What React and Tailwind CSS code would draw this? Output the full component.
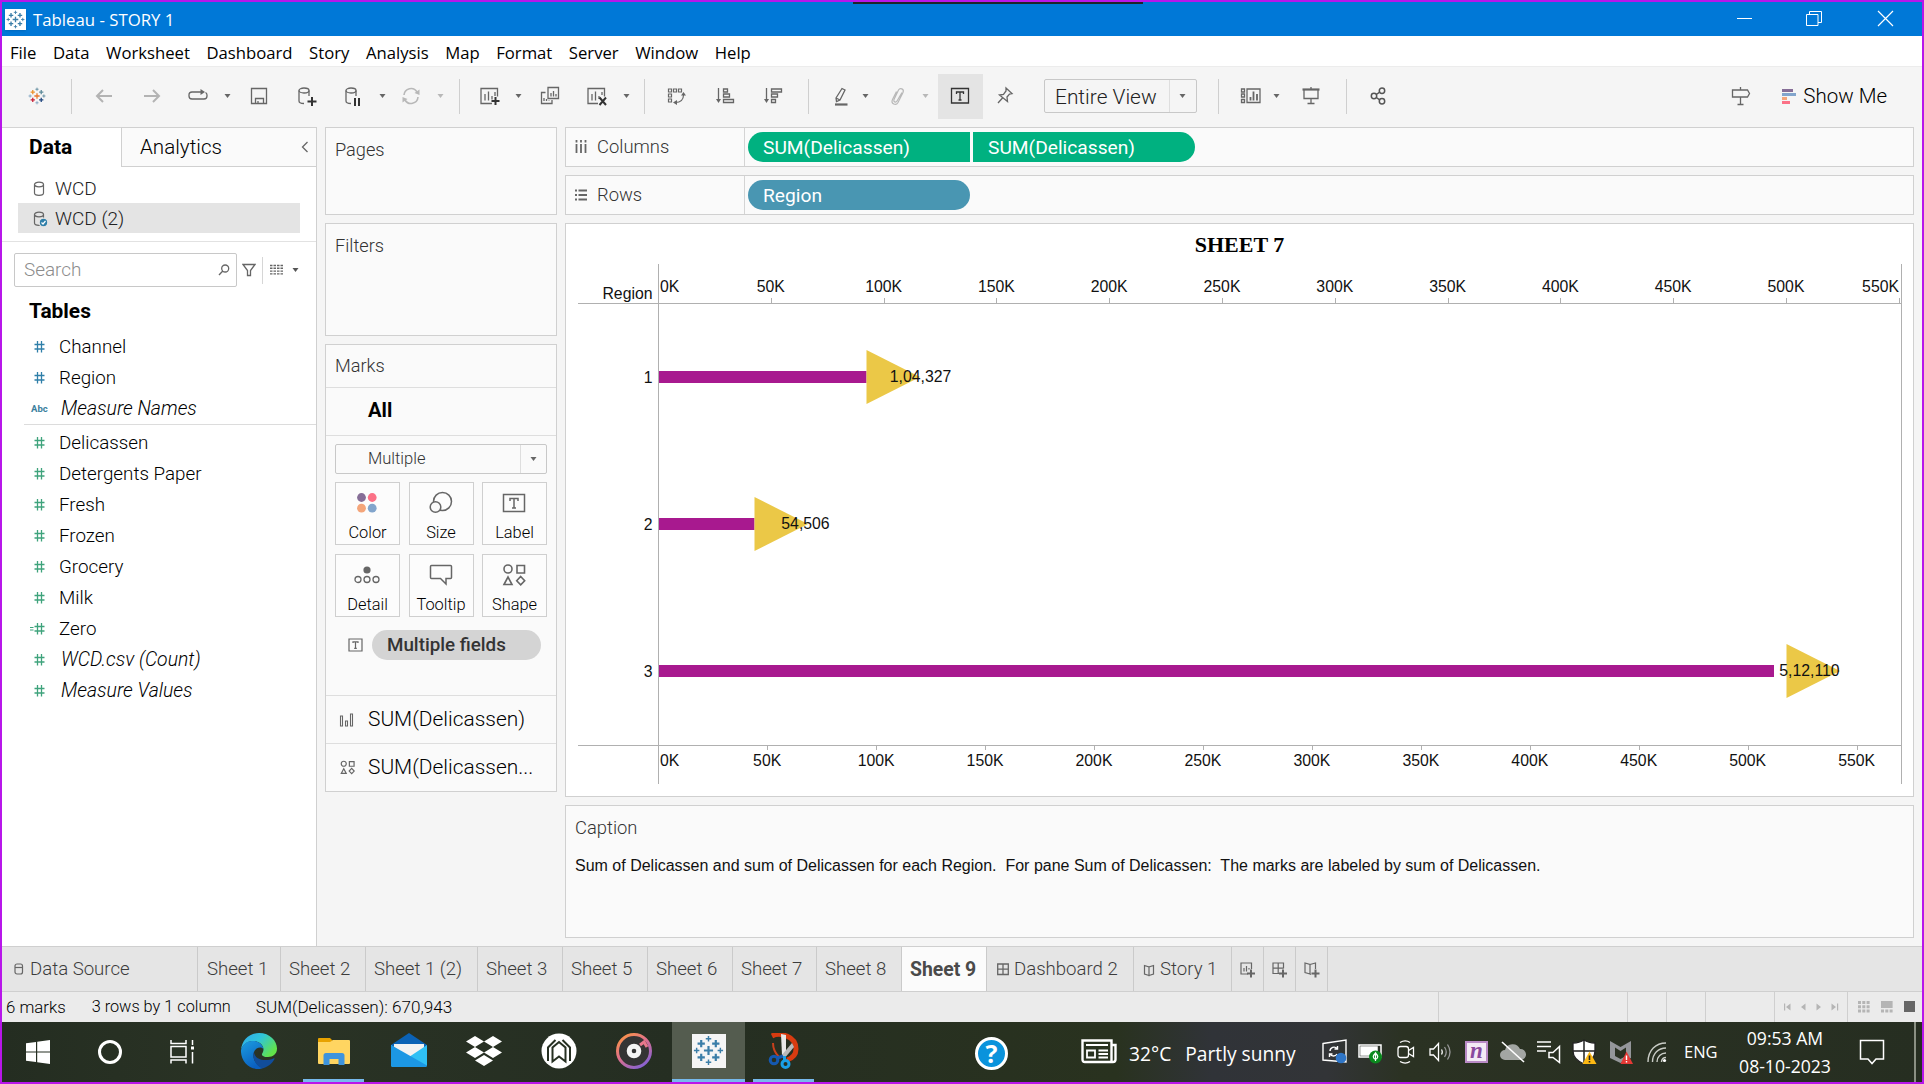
const UI = "font-['Roboto',sans-serif]";
const WIN = "font-['Open_Sans',sans-serif]";

/* ---------- generic helpers ---------- */
function Svg({ w = 20, h = 20, className = "", children, stroke = "#666", sw = 1.3 }) {
  return (
    <svg width={w} height={h} viewBox={`0 0 ${w} ${h}`} className={`shrink-0 ${className}`} fill="none" stroke={stroke} strokeWidth={sw}>
      {children}
    </svg>
  );
}

function Caret({ className = "", color = "#666" }) {
  return (
    <svg width="12" height="6" viewBox="0 0 12 6" className={`shrink-0 ${className}`}>
      <path d="M2.500 1h6L5.500 5z" fill={color} />
    </svg>
  );
}

const Sep = ({ className = "" }) => <div className={`h-[35px] w-px shrink-0 bg-[#cfcfcf] ${className}`} />;

function TableauMark({ size, colors }) {
  const c = colors || ["#3b7ea8", "#3b7ea8", "#3b7ea8", "#3b7ea8", "#3b7ea8", "#3b7ea8", "#3b7ea8"];
  const plus = (x, y, r, col, w) => <path key={`${x}-${y}`} d={`M${x - r} ${y}h${2 * r}M${x} ${y - r}v${2 * r}`} stroke={col} strokeWidth={w} />;
  return (
    <svg width={size} height={size} viewBox="0 0 34 34" fill="none" className="shrink-0">
      {plus(17, 17, 5, c[0], 2.4)}
      {plus(9, 9.5, 4, c[1], 2.4)}
      {plus(25, 9.5, 4, c[2], 2.4)}
      {plus(9, 24.5, 4, c[3], 2.4)}
      {plus(25, 24.5, 4, c[4], 2.4)}
      {plus(17, 4.2, 3, c[5], 1.6)}
      {plus(17, 29.8, 3, c[6], 1.6)}
      {plus(4, 17, 3, c[6], 1.6)}
      {plus(30, 17, 3, c[5], 1.6)}
    </svg>
  );
}

/* ---------- title bar + menu ---------- */
function TitleBar() {
  return (
    <div className={`flex h-[34px] shrink-0 items-center bg-[#0078d7] text-white ${WIN}`}>
      <div className="ml-[3px] flex h-[21px] w-[21px] items-center justify-center bg-white shadow">
        <TableauMark size={19} />
      </div>
      <div className="ml-[7px] pt-[2px] text-[16.8px] leading-none">Tableau - STORY 1</div>
      <div className="ml-auto flex items-center pr-[28px]">
        <Svg w={16} h={20} stroke="#fff" sw={1}><path d="M0 9.500h15" /></Svg>
        <Svg w={17} h={20} stroke="#fff" sw={1} className="ml-[53px]">
          <path d="M.5 5.500h11.500v11H.5zM3.500 5.500V2.500H15.500V13.500H12" />
        </Svg>
        <Svg w={17} h={20} stroke="#fff" sw={1.2} className="ml-[54px]"><path d="M1 2l15 15M16 2L1 17" /></Svg>
      </div>
    </div>
  );
}

function MenuBar() {
  const items = ["File", "Data", "Worksheet", "Dashboard", "Story", "Analysis", "Map", "Format", "Server", "Window", "Help"];
  return (
    <div className={`flex h-[30px] shrink-0 items-center gap-[16.500px] bg-white pl-[8px] pt-[4px] text-[16.7px] leading-none text-black ${WIN}`}>
      {items.map((m) => <span key={m}>{m}</span>)}
    </div>
  );
}

/* ---------- toolbar ---------- */
function Toolbar() {
  return (
    <div className={`flex h-[61px] shrink-0 items-center border-t border-[#ececec] bg-[#f5f5f5] pb-[2px] ${UI}`}>
      <div className="flex w-[69px] shrink-0 justify-center">
        <TableauMark size={18} colors={["#e8762d", "#eb912c", "#5c8a99", "#c72037", "#1f457e", "#59879b", "#7a9fbe"]} />
      </div>
      <Sep />
      <Svg stroke="#b3b3b3" sw={2} className="ml-[22px]"><path d="M18 10H3M9 4l-6 6 6 6" /></Svg>
      <Svg stroke="#b3b3b3" sw={2} className="ml-[28px]"><path d="M2 10h15M11 4l6 6-6 6" /></Svg>
      <Svg className="ml-[26px]"><path d="M14 6H4a3 3 0 0 0-3 3v1a3 3 0 0 0 3 3h12a3 3 0 0 0 3-3V9a3 3 0 0 0-1.500-2.500" /><path d="M12.500 3l4.500 3-4.500 3z" fill="#666" stroke="none" /></Svg>
      <Caret className="ml-[14px]" />
      <Svg className="ml-[15px]"><path d="M2.500 2.500h15v15h-15zM6.500 17.500v-5h8v5M9 17.500V15" /></Svg>
      <Svg w={22} className="ml-[28px]">
        <ellipse cx="7" cy="4.500" rx="5" ry="2.500" /><path d="M2 4.500v10.500c0 1.400 2 2.500 5 2.500M12 4.500V10" /><path d="M15 11v9M10.500 15.500h9" stroke="#333" strokeWidth="2" />
      </Svg>
      <Svg w={22} className="ml-[25px]">
        <ellipse cx="7" cy="4.500" rx="5" ry="2.500" /><path d="M2 4.500v10.500c0 1.400 2 2.500 5 2.500M12 4.500V10" /><path d="M11 12v8M15 12v8" stroke="#333" strokeWidth="2" />
      </Svg>
      <Caret className="ml-[11px]" />
      <Svg className="ml-[12px]" stroke="#b8b8b8" sw={1.6}><path d="M3 9a7 7 0 0 1 13-3M17 11a7 7 0 0 1-13 3" /><path d="M18.500 3.500V9L13.500 7zM1.500 16.500V11l5 2z" fill="#b8b8b8" stroke="none" /></Svg>
      <Caret className="ml-[14px]" color="#b8b8b8" />
      <Sep className="ml-[12px]" />
      <Svg className="ml-[20px]">
        <path d="M17.500 10.500V2.500H1v15h11M5 8v6.500M8.500 5.500v9M12 10v3.500M15 6v4" /><path d="M15.500 11v8M11.500 15h8" stroke="#333" strokeWidth="2" />
      </Svg>
      <Caret className="ml-[13px]" />
      <Svg className="ml-[15px]"><path d="M8 1.500h10.500v11H8zM5.500 6.500H1.500v11H12v-3.500M11 7v3.500M13.500 5v5.500M16 8v2.500M4 12v3M6.500 13v2M9 14.500V15" /></Svg>
      <Svg className="ml-[27px]">
        <path d="M17.500 10.500V2.500H1v15h10M5 8v6.500M8.500 5.500v9M12 10v3M15 6v3" /><path d="M12.500 11.500l6.500 7.500M19 11.500l-6.500 7.500" stroke="#333" strokeWidth="2" />
      </Svg>
      <Caret className="ml-[14px]" />
      <Sep className="ml-[11px]" />
      <Svg className="ml-[22px]" sw={1.2}>
        <path d="M1.500 3h3v3h-3zM6.500 3h3v3h-3zM11.500 3h3v3h-3zM1.500 8h3v3h-3zM1.500 13h3v3h-3zM16.500 9c0 5-3 7.500-8 7.500" />
        <path d="M14 9.500l2.500-3.500 2.500 3.500zM10 14l-4 2.500 4 2.500z" fill="#666" stroke="none" />
      </Svg>
      <Svg className="ml-[28px]"><path d="M3.500 2v12" /><path d="M1 13l2.500 4L6 13z" fill="#666" stroke="none" /><path d="M8.500 3h4v3h-4zM8.500 8h6v3h-6zM8.500 13.500h10v3h-10z" /></Svg>
      <Svg className="ml-[28px]"><path d="M3.500 2v12" /><path d="M1 13l2.500 4L6 13z" fill="#666" stroke="none" /><path d="M8.500 3h10v3h-10zM8.500 8h6v3h-6zM8.500 13.500h4v3h-4z" /></Svg>
      <Sep className="ml-[25px]" />
      <Svg className="ml-[22px]"><path d="M5 12L11 2.500l3 1.500-5 10-3.500 1.500zM5 12l4 2" /><path d="M4 18.500h12.500" strokeWidth="2.200" /></Svg>
      <Caret className="ml-[9px]" />
      <Svg className="ml-[15px]" stroke="#b8b8b8" sw={1.2}><path d="M15 6.500l-5 8.500c-1.200 2-4 .800-3-1.500L11.500 4c1.500-2.800 6-1 4.500 2.500L11 16.500c-2 3.500-7.500 1.500-5.500-3L9.500 5.500" /></Svg>
      <Caret className="ml-[13px]" color="#b8b8b8" />
      <div className="ml-[6px] flex h-[45px] w-[45px] shrink-0 items-center justify-center bg-[#e4e4e4] pr-[2px]">
        <Svg stroke="#333"><path d="M1.500 2.500h17v14.500h-17zM6.500 8V6h7v2M10 6v8M8.500 14h3" /></Svg>
      </div>
      <Svg className="ml-[12px]"><path d="M11 2l6 5.500-2.500.500-2.500 3 .500 4.500L4.500 9l4-.500 2.500-3.500zM7.500 12L3 17" /></Svg>
      <div className="ml-[29px] flex h-[34px] w-[153px] shrink-0 items-stretch rounded-[2px] border border-[#c8c8c8]">
        <div className="flex flex-1 items-center border-r border-[#dedede] pl-[10px] pt-[2px] text-[20.9px] font-light leading-none text-[#222]">Entire View</div>
        <div className="flex w-[26px] items-center justify-center"><Caret /></div>
      </div>
      <Sep className="ml-[21px]" />
      <Svg w={21} className="ml-[21px]"><path d="M1.500 3h3v3h-3zM1.500 8h3v3h-3zM1.500 13.500h3v3h-3zM7 3h13v13.500H7z" /><path d="M10.500 14.500V11M13.500 14.500V5.500M17 14.500V8" strokeWidth="1.800" /></Svg>
      <Caret className="ml-[10px]" />
      <Svg className="ml-[18px]"><path d="M1.500 3.500h17" strokeWidth="2.200" /><path d="M3 4v8.500h14V4M10 1v2M10 12.500v5M6.500 17.500h7" /></Svg>
      <Sep className="ml-[25px]" />
      <Svg className="ml-[22px]" stroke="#555" sw={1.5}><circle cx="5" cy="10" r="2.700" /><circle cx="13" cy="4.700" r="2.700" /><circle cx="13" cy="15.300" r="2.700" /><path d="M7.300 8.500l3.400-2.300M7.300 11.500l3.400 2.300" /></Svg>
      <Svg className="ml-auto"><path d="M1.500 4h15l2 3.500-2 3.500h-15zM9.500 1v3M9.500 11v7.500M6.500 18.500h6" /></Svg>
      <div className="ml-[31px] flex w-[14px] flex-col gap-[1px]">
        <div className="h-[3px] w-[11px] bg-[#866e97]" />
        <div className="h-[3px] w-[14px] bg-[#82a5cc]" />
        <div className="h-[3px] w-[5px] bg-[#f4a57a]" />
        <div className="h-[3px] w-[8px] bg-[#fb7186]" />
      </div>
      <div className="ml-[7px] mr-[35px] text-[20.5px] font-light leading-none text-black">Show Me</div>
    </div>
  );
}

/* ---------- data pane ---------- */
function Db({ checked }) {
  return (
    <Svg w={16} h={18} sw={1.2}>
      <ellipse cx="6" cy="4.500" rx="4.500" ry="2.300" />
      <path d="M1.500 4.500v8.500c0 1.300 2 2.300 4.500 2.300s4.500-1 4.500-2.300V4.500" />
      {checked && <><circle cx="10.500" cy="12.500" r="4.300" fill="#2f7fa9" stroke="#e4e4e4" /><path d="M8.500 12.500l1.500 1.500 2.500-3" stroke="#fff" /></>}
    </Svg>
  );
}

function Hash({ color, calc }) {
  return (
    <Svg w={16} h={14} stroke={color} sw={1.3}>
      <path d="M7.500 1v11.500M11.500 1v11.500M4.500 4.500h10M4.500 9h10" />
      {calc && <path d="M0 5.500h3.500M0 8h3.500" strokeWidth="1" />}
    </Svg>
  );
}

function Field({ name, color, italic, abc, calc }) {
  return (
    <div className="flex h-[31px] items-center">
      <div className="ml-[28px] flex w-[29px] shrink-0 items-center">
        {abc ? <span className="ml-px text-[9.5px] font-bold leading-none text-[#3b7f9e]">Abc</span> : <Hash color={color} calc={calc} />}
      </div>
      <span className={italic ? "ml-[2px] text-[19.4px] font-light italic leading-none text-black" : "pt-px text-[18.8px] font-light leading-none text-black"}>{name}</span>
    </div>
  );
}

function DataPane() {
  const measures = ["Delicassen", "Detergents Paper", "Fresh", "Frozen", "Grocery", "Milk"];
  return (
    <div className="flex w-[315px] shrink-0 flex-col border-r border-[#d0d0d0] bg-white">
      <div className="flex h-[40px]">
        <div className="flex w-[119px] items-center border-t border-[#d4d4d4] pl-[27px] text-[21px] font-bold leading-none text-black">Data</div>
        <div className="flex flex-1 items-center border-b border-l border-t border-[#d0d0d0] bg-[#fafafa] pl-[18px] text-[20.6px] font-light leading-none text-black">
          Analytics
          <Svg w={8} h={12} className="ml-auto mr-[7px]"><path d="M6.500 1L1.500 6l5 5" /></Svg>
        </div>
      </div>
      <div className="mt-[6px] flex h-[30px] items-center pl-[31px] pt-px text-[19px] font-light leading-none text-[#222]"><Db /><span className="ml-[6px]">WCD</span></div>
      <div className="ml-[16px] mr-[16px] flex h-[30px] items-center bg-[#e4e4e4] pl-[15px] pt-px text-[19px] font-light leading-none text-[#222]"><Db checked /><span className="ml-[6px]">WCD (2)</span></div>
      <div className="mt-[8px] h-px bg-[#e2e2e2]" />
      <div className="mt-[11px] flex h-[34px] items-center pl-[12px]">
        <div className="flex h-[34px] w-[223px] items-center rounded-[2px] border border-[#c8c8c8] pl-[9px] text-[18.9px] font-light leading-none text-[#8c8c8c]">
          Search
          <Svg w={12} h={12} className="ml-auto mr-[6px]"><circle cx="7.200" cy="4.500" r="3.500" /><path d="M4.800 7L1 11" /></Svg>
        </div>
        <Svg w={14} h={14} className="ml-[5px]"><path d="M1 1.500h12L8.500 7.500v5h-3v-5z" /></Svg>
        <div className="ml-[6px] h-[27px] w-px bg-[#d6d6d6]" />
        <Svg w={14} h={12} className="ml-[7px]" sw={1.4}><path d="M0 1.500h13M0 4.300h13M0 7.100h13M0 9.900h13" strokeDasharray="2.500 1" /></Svg>
        <Caret className="ml-[6px]" color="#555" />
      </div>
      <div className="mt-[11px] flex h-[27px] items-center pl-[27px] text-[20.9px] font-bold leading-none text-black">Tables</div>
      <div className="mt-[6px]">
        <Field name="Channel" color="#2f7fa9" />
        <Field name="Region" color="#2f7fa9" />
        <Field name="Measure Names" abc italic />
      </div>
      <div className="ml-[22px] border-t border-[#dcdcdc] pt-[2px]" />
      {measures.map((m) => <Field key={m} name={m} color="#3fa37c" />)}
      <Field name="Zero" color="#3fa37c" calc />
      <Field name="WCD.csv (Count)" color="#3fa37c" italic />
      <Field name="Measure Values" color="#3fa37c" italic />
    </div>
  );
}

/* ---------- shelves / marks ---------- */
const card = "border border-[#d0d0d0] bg-[#fafafa]";

function ShapeIcon({ w, sw }) {
  return (
    <svg width={w} height={w} viewBox="0 0 24 24" fill="none" stroke="#666" strokeWidth={sw} className="shrink-0">
      <circle cx="6" cy="6" r="4" /><path d="M15 2.500h7.500V10H15zM2 21.500L6 14l4 7.500zM18.700 13.500l4 4.200-4 4.200-4-4.200z" />
    </svg>
  );
}

function MarkButton({ label, children }) {
  return (
    <div className="flex h-[63px] w-[65px] flex-col items-center border border-[#cfcfcf] bg-white/40">
      <div className="flex h-[40px] items-center justify-center pr-px">{children}</div>
      <div className="whitespace-nowrap text-[16.4px] font-light leading-[20px] text-black">{label}</div>
    </div>
  );
}

function Cards() {
  return (
    <div className="ml-[8px] flex w-[232px] shrink-0 flex-col">
      <div className={`h-[88px] pl-[9px] pt-[12px] text-[18.2px] font-light leading-[20px] text-[#333] ${card}`}>Pages</div>
      <div className={`mt-[8px] h-[113px] pl-[9px] pt-[12px] text-[18.2px] font-light leading-[20px] text-[#333] ${card}`}>Filters</div>
      <div className={`mt-[8px] flex h-[448px] flex-col ${card}`}>
        <div className="flex h-[43px] items-center border-b border-[#dedede] pl-[9px] pt-px text-[18.2px] font-light leading-none text-[#333]">Marks</div>
        <div className="flex h-[48px] items-center border-b border-[#dedede] pb-[2px] pl-[42px] text-[20.2px] font-bold leading-none text-black">All</div>
        <div className="mx-[9px] mt-[8px] flex h-[30px] rounded-[2px] border border-[#c8c8c8]">
          <div className="flex flex-1 items-center border-r border-[#dedede] pl-[32px] text-[16.5px] font-light leading-none text-[#333]">Multiple</div>
          <div className="flex w-[25px] items-center justify-center"><Caret /></div>
        </div>
        <div className="mx-[9px] mt-[8px] grid grid-cols-3 justify-between gap-x-[8.500px] gap-y-[9px]">
          <MarkButton label="Color">
            <svg width="22" height="22" viewBox="0 0 22 22"><circle cx="5.500" cy="5.500" r="4.400" fill="#866e97" /><circle cx="16.200" cy="5.500" r="4.400" fill="#fb7186" /><circle cx="5.500" cy="16.200" r="4.400" fill="#f4a57a" /><circle cx="16.200" cy="16.200" r="4.400" fill="#82a5cc" /></svg>
          </MarkButton>
          <MarkButton label="Size"><Svg w={24} h={24} sw={1.5}><circle cx="13.500" cy="10.500" r="9" /><circle cx="6.500" cy="16" r="5.300" fill="#fafafa" /></Svg></MarkButton>
          <MarkButton label="Label"><Svg w={24} h={20} sw={1.5}><path d="M1.500 1.500h21v17h-21zM8 8V5.500h8V8M12 5.500v9.500M10 15h4" /></Svg></MarkButton>
          <MarkButton label="Detail"><Svg w={26} h={18}><circle cx="13" cy="4" r="3.600" fill="#666" stroke="none" /><circle cx="4" cy="13.500" r="3" /><circle cx="13" cy="13.500" r="3" /><circle cx="22" cy="13.500" r="3" /></Svg></MarkButton>
          <MarkButton label="Tooltip"><Svg w={24} h={22} sw={1.5}><path d="M2.500 1.500h19q1 0 1 1v11q0 1-1 1h-4.500v5.500l-5.500-5.500H2.500q-1 0-1-1v-11q0-1 1-1z" /></Svg></MarkButton>
          <MarkButton label="Shape"><ShapeIcon w={24} sw={1.6} /></MarkButton>
        </div>
        <div className="mt-[13px] flex h-[30px] items-center pl-[22px]">
          <Svg w={15} h={14} sw={1.2}><path d="M1 1h13v12H1zM5 5V3.800h5V5M7.500 3.800v6.500M6.200 10.300h2.600" /></Svg>
          <div className="ml-[9px] flex h-[30px] w-[169px] items-center rounded-full bg-[#d4d4d4] pl-[15px] pt-px text-[18.8px] font-medium leading-none text-[#333]">Multiple fields</div>
        </div>
        <div className="mt-auto flex h-[48px] items-center border-t border-[#dedede] pl-[13px] text-[20.9px] font-light leading-none text-black">
          <Svg w={16} h={14} sw={1.1}><path d="M1.500 3h2v10h-2zM6.500 8h2v5h-2zM11.500 1h2v12h-2z" /></Svg>
          <span className="ml-[13px]">SUM(Delicassen)</span>
        </div>
        <div className="flex h-[48px] items-center border-t border-[#dedede] pl-[14px] text-[20.9px] font-light leading-none text-black">
          <ShapeIcon w={15} sw={1.9} />
          <span className="ml-[13px]">SUM(Delicassen...</span>
        </div>
      </div>
    </div>
  );
}

function Shelf({ label, icon, children }) {
  return (
    <div className={`flex h-[40px] shrink-0 items-center ${card}`}>
      <div className="flex h-full w-[179px] shrink-0 items-center border-r border-[#d4d4d4] pl-[9px] text-[18.4px] font-light leading-none text-[#333]">
        {icon}<span className="ml-[10px] pt-px">{label}</span>
      </div>
      <div className="ml-[3px] flex gap-[3px] text-[19.2px] leading-none text-white">{children}</div>
    </div>
  );
}

/* ---------- chart ---------- */
const TOP = Array.from({ length: 12 }, (_, i) => ({ label: `${i * 50}K`, x: 658 + i * 112.8 }));
const BOTTOM = Array.from({ length: 12 }, (_, i) => ({ label: `${i * 50}K`, x: 658.2 + i * 108.95 }));
const ROWS = [
  { id: "1", y: 377, end: 866.5, tri: 866.5, label: "1,04,327", lx: 920.5 },
  { id: "2", y: 524, end: 754.5, tri: 754.5, label: "54,506", lx: 805.5 },
  { id: "3", y: 671, end: 1774, tri: 1786.5, label: "5,12,110", lx: 1809.5 },
];

function Chart() {
  return (
    <svg width="1347" height="572" viewBox="566 224 1347 572" className="block font-['Liberation_Sans',Arial,sans-serif] text-[15.8px]" fill="#111">
      <text x="1239.500" y="252" textAnchor="middle" className="font-['Liberation_Serif',serif] text-[22px] font-bold" fill="#000">SHEET 7</text>
      <g stroke="#b0b0b0" strokeWidth="1">
        <path d="M658.500 264V784M1901.500 264V784M578 303.500H1902M578 745.500H1902" fill="none" />
        {TOP.slice(1).map((t) => <path key={t.label} d={`M${Math.round(t.x) + 0.5} 298v5`} />)}
        {BOTTOM.slice(1).map((t) => <path key={t.label} d={`M${Math.round(t.x) + 0.5} 746v4`} />)}
      </g>
      {TOP.map((t, i) => (
        <text key={t.label} x={i === 0 ? 660 : i === 11 ? 1899 : t.x} y="292" textAnchor={i === 0 ? "start" : i === 11 ? "end" : "middle"}>{t.label}</text>
      ))}
      {BOTTOM.map((t, i) => (
        <text key={t.label} x={i === 0 ? 660 : t.x} y="766" textAnchor={i === 0 ? "start" : "middle"}>{t.label}</text>
      ))}
      <text x="652.500" y="299" textAnchor="end">Region</text>
      {ROWS.map((r) => (
        <g key={r.id}>
          <rect x="659" y={r.y - 6} width={r.end - 659} height="12" fill="#a8198f" />
          <path d={`M${r.tri} ${r.y - 27}L${r.tri + 53.5} ${r.y}L${r.tri} ${r.y + 27}z`} fill="#ebc847" />
          <text x="652.500" y={r.y + 5.5} textAnchor="end">{r.id}</text>
          <text x={r.lx} y={r.y + 5} textAnchor="middle">{r.label}</text>
        </g>
      ))}
    </svg>
  );
}

function Worksheet() {
  return (
    <div className="ml-[8px] flex w-[1349px] shrink-0 flex-col">
      <Shelf label="Columns" icon={<Svg w={12} h={14} sw={1.8}><path d="M1.500 0v2.500M6 0v2.500M10.500 0v2.500M1.500 4v9M6 4v9M10.500 4v9" /></Svg>}>
        <div className="flex h-[30px] w-[222px] items-center rounded-l-full rounded-r-[1px] bg-[#00b180] pl-[15px] pt-px">SUM(Delicassen)</div>
        <div className="flex h-[30px] w-[222px] items-center rounded-l-[1px] rounded-r-full bg-[#00b180] pl-[15px] pt-px">SUM(Delicassen)</div>
      </Shelf>
      <div className="h-[8px]" />
      <Shelf label="Rows" icon={<Svg w={12} h={12} sw={1.8}><path d="M0 1.500h2M0 6h2M0 10.500h2M3.500 1.500h8.500M3.500 6h8.500M3.500 10.500h8.500" /></Svg>}>
        <div className="flex h-[30px] w-[222px] items-center rounded-full bg-[#4996b2] pl-[15px] pt-px">Region</div>
      </Shelf>
      <div className="mt-[8px] h-[574px] border border-[#d0d0d0] bg-white"><Chart /></div>
      <div className={`mt-[8px] h-[133px] pl-[9px] pt-[12px] ${card}`}>
        <div className="text-[18.4px] font-light leading-[20px] text-[#333]">Caption</div>
        <div className="mt-[19px] whitespace-pre font-['Liberation_Sans',Arial,sans-serif] text-[16px] leading-[18px] text-[#111]">
          {"Sum of Delicassen and sum of Delicassen for each Region.  For pane Sum of Delicassen:  The marks are labeled by sum of Delicassen."}
        </div>
      </div>
    </div>
  );
}

/* ---------- sheet tabs + status ---------- */
const book = "M1.500 2.500l4.500 1.500v8.500l-4.500-1.500zM10.500 2.500L6 4v8.500l4.500-1.500z";

function SheetTabs() {
  const tab = "flex shrink-0 items-center whitespace-nowrap border-r border-[#cacaca] pt-px pl-[9px]";
  return (
    <div className={`flex h-[46px] shrink-0 border-y border-[#cfcfcf] bg-[#e5e5e5] text-[18.6px] font-light leading-none text-[#3c3c3c] ${UI}`}>
      <div className={`w-[196px] ${tab}`}>
        <Svg w={12} h={14} className="ml-[2px]" sw={1.2}><rect x="2" y="1" width="7.500" height="10" rx="2" /><path d="M2 4.500h7.500" /></Svg>
        <span className="ml-[5px]">Data Source</span>
      </div>
      <div className={`w-[83px] ${tab}`}>Sheet 1</div>
      <div className={`w-[85px] ${tab} !pl-[8px]`}>Sheet 2</div>
      <div className={`w-[112px] ${tab} !pl-[8px]`}>Sheet 1 (2)</div>
      <div className={`w-[85px] ${tab} !pl-[8px]`}>Sheet 3</div>
      <div className={`w-[85px] ${tab} !pl-[8px]`}>Sheet 5</div>
      <div className={`w-[85px] ${tab} !pl-[8px]`}>Sheet 6</div>
      <div className={`w-[84px] ${tab} !pl-[8px]`}>Sheet 7</div>
      <div className={`w-[85px] ${tab} !pl-[8px]`}>Sheet 8</div>
      <div className={`w-[85px] bg-[#fbfbfb] text-[19.4px] font-bold text-[#4a4a4a] ${tab} !pl-[8px]`}>Sheet 9</div>
      <div className={`w-[147px] ${tab} !pl-[10px]`}>
        <Svg w={12} h={14} sw={1.3}><path d="M.7 1h10.600v10.500H.7zM6 1v10.500M.7 6.200h10.600" /></Svg>
        <span className="ml-[5px]">Dashboard 2</span>
      </div>
      <div className={`w-[98px] ${tab}`}>
        <Svg w={12} h={14} sw={1.2}><path d={book} /></Svg>
        <span className="ml-[5px]">Story 1</span>
      </div>
      <div className="flex w-[32px] shrink-0 items-center justify-center border-r border-[#cacaca] pl-px pt-px">
        <Svg w={16} h={18} sw={1.2}><path d="M11.500 8V2H1v11h7M4 7v3.500M6.500 5v5.500M9 7v1.500" /><path d="M11 8.500v8M7 12.500h8" strokeWidth="2" /></Svg>
      </div>
      <div className="flex w-[32px] shrink-0 items-center justify-center border-r border-[#cacaca] pl-px pt-px">
        <Svg w={16} h={18} sw={1.2}><path d="M11.500 7.500V2H1v10.500h6M6.200 2v10.500M1 7.200h10.500" /><path d="M11 8.500v8M7 12.500h8" strokeWidth="2" /></Svg>
      </div>
      <div className="flex w-[32px] shrink-0 items-center justify-center border-r border-[#cacaca] pl-px pt-px">
        <Svg w={16} h={18} sw={1.2}><path d="M7 13.500L6 13l-5-1.500V2l5 1.500V13M6 3.500L11.500 2v6" /><path d="M11.500 8.500v8M7.500 12.500h8" strokeWidth="2" /></Svg>
      </div>
    </div>
  );
}

function StatusBar() {
  const nav = "#b5b5b5";
  return (
    <div className={`flex h-[30px] shrink-0 items-center bg-[#ebebeb] leading-none text-black ${UI} font-light`}>
      <span className="ml-[4px] pt-px text-[16.8px]">6 marks</span>
      <span className="ml-[26px] pt-px text-[16.3px]">3 rows by 1 column</span>
      <span className="ml-[25px] pt-px text-[17.1px]">SUM(Delicassen): 670,943</span>
      <div className="ml-auto flex h-[30px] items-stretch self-start">
        <div className="w-[189px] border-l border-[#cfcfcf]" />
        <div className="w-[39px] border-l border-[#cfcfcf]" />
        <div className="w-[39px] border-l border-[#cfcfcf]" />
        <div className="w-[69px] border-l border-[#cfcfcf]" />
        <div className="flex w-[73px] items-center border-l border-[#cfcfcf] pl-[8px]">
          <svg width="58" height="10" viewBox="0 0 58 10" fill={nav}>
            <path d="M1 1.500h1.200v7H1zM7.500 1.500v7L3 5zM22.500 1.500v7L18 5zM33.500 1.500v7L38 5zM48.500 1.500v7L53 5zM54 1.500h1.200v7H54z" />
          </svg>
        </div>
        <div className="flex w-[75px] items-center gap-[11px] border-l border-[#cfcfcf] pb-px pl-[10px]">
          <svg width="12" height="12" viewBox="0 0 12 12" fill="#b5b5b5"><path d="M0 0h3v3H0zM4.300 0h3v3h-3zM8.600 0h3v3h-3zM0 4.300h3v3H0zM4.300 4.300h3v3h-3zM8.600 4.300h3v3h-3zM0 8.600h3v3H0zM4.300 8.600h3v3h-3zM8.600 8.600h3v3h-3z" /></svg>
          <svg width="12" height="12" viewBox="0 0 12 12" fill="#b5b5b5"><path d="M0 0h11.600v7H0zM0 8.600h3v3H0zM4.300 8.600h3v3h-3zM8.600 8.600h3v3h-3z" /></svg>
          <div className="h-[11px] w-[11px] bg-[#666]" />
        </div>
      </div>
    </div>
  );
}

/* ---------- taskbar ---------- */
function TaskButton({ children, active, open }) {
  return (
    <div className="flex h-full w-[75px] shrink-0 flex-col items-center">
      <div className={active ? "flex w-[73px] flex-1 items-center justify-center bg-[#545c4f]" : "flex w-full flex-1 items-center justify-center"}>{children}</div>
      <div className={active ? "h-[3px] w-[73px] bg-[#76b9ed]" : open ? "h-[3px] w-[61px] bg-[#76b9ed]" : "h-[3px]"} />
    </div>
  );
}

function Taskbar() {
  return (
    <div className={`flex h-[60px] shrink-0 items-center bg-[linear-gradient(90deg,#242d21_0%,#2a3325_12%,#252e22_35%,#29321f_58%,#303338_63%,#323437_69%,#2b3223_73%,#262e21_100%)] text-white ${WIN}`}>
      <div className="flex w-[72px] shrink-0 justify-center">
        <svg width="24" height="24" viewBox="0 0 24 24" fill="#fff"><path d="M0 3.300L10 1.900v9.600H0zM11.200 1.700L24 0v11.500H11.200zM0 12.600h10v9.500L0 20.700zM11.200 12.600H24V24l-12.800-1.800z" /></svg>
      </div>
      <div className="flex w-[72px] shrink-0 justify-center"><div className="h-[24px] w-[24px] rounded-full border-[3px] border-white" /></div>
      <div className="flex w-[72px] shrink-0 justify-center">
        <Svg w={26} h={26} stroke="#fff" sw={1.5}><path d="M2 1v3.500h15V1M2 7.500h15v10.500H2zM2 24.500V21h15v3.500M23.500 1v5M23.500 13v11.500" /><rect x="22" y="7.500" width="3" height="3" fill="#fff" stroke="none" /></Svg>
      </div>
      <div className="ml-[3px] flex h-full">
        <TaskButton>
          <svg width="36" height="36" viewBox="0 0 36 36">
            <defs>
              <linearGradient id="e1" x1="0" y1="0" x2="1" y2=".6"><stop offset="0" stopColor="#2fa8ee" /><stop offset=".5" stopColor="#30c5d8" /><stop offset="1" stopColor="#62e34a" /></linearGradient>
              <linearGradient id="e2" x1="0" y1="0" x2=".5" y2="1"><stop offset="0" stopColor="#1c9de0" /><stop offset="1" stopColor="#0a5fc0" /></linearGradient>
            </defs>
            <path d="M0 17C1 7 8 0 18 0c11 0 18 8 18 15.500 0 5.500-4 8.500-9 8.500-4 0-6.500-1.500-6-3 .300-1 1.500-2 1.500-4.500C22.500 12 18 8 12 8 6 8 1.500 12 0 17z" fill="url(#e1)" />
            <path d="M0 17C2 10.500 7 7.500 12 8c6 0 10 4 10.500 8-2-3-9-2-10 5-.800 6.500 4 12 9 14-1 .700-2.500 1-4 1C7 36-.500 27 0 17z" fill="url(#e2)" />
            <path d="M13 19c-2 5 1 13 8 16.500 5-1 10-4.500 12.500-9.500.300-.800-.500-1-1.200-.600C26 28.500 14 28 13 19z" fill="#114d9a" />
          </svg>
        </TaskButton>
        <TaskButton open>
          <svg width="34" height="30" viewBox="0 0 34 30" className="mt-[3px]">
            <path d="M1 2q0-1 1-1h11l3 3h-1l-2 3H1z" fill="#e8a200" /><path d="M1 5h12l3-2h16q1 0 1 1v22q0 1-1 1H2q-1 0-1-1z" fill="#ffd561" />
            <path d="M6.500 28V18.500q0-2.500 2.500-2.500h16q2.500 0 2.500 2.500V28h-6v-6h-9v6z" fill="#3e94dd" />
          </svg>
        </TaskButton>
        <TaskButton>
          <svg width="36" height="36" viewBox="0 0 36 36">
            <path d="M0 12L18 0l18 12v8H0z" fill="#0b62b5" /><path d="M3 11h30v8L18 24 3 19z" fill="#f2f2f2" />
            <path d="M0 12l18 12L36 12v20q0 2-2 2H2q-2 0-2-2z" fill="#2fc0f5" /><path d="M0 12l36 20.500Q35.500 34 34 34H2q-2 0-2-2z" fill="#1c97e4" />
          </svg>
        </TaskButton>
        <TaskButton>
          <svg width="36" height="32" viewBox="0 0 36 32" fill="#fff"><path d="M9 1l9 5.500L9 12 0 6.500zM27 1l9 5.500L27 12l-9-5.500zM9 12l9 5.500L9 23l-9-5.500zM27 12l9 5.500L27 23l-9-5.500zM18 20l9 5.500-9 5.500-9-5.500z" /></svg>
        </TaskButton>
        <TaskButton>
          <svg width="36" height="36" viewBox="0 0 36 36"><circle cx="18" cy="18" r="17.500" fill="#fff" /><path d="M7 28V14.500L14.500 7M29 28V14.500L21.500 7" fill="none" stroke="#263022" strokeWidth="2" /><path d="M11.500 28.500V14.500L18 9l6.500 5.500v14L18 23.500z" fill="none" stroke="#263022" strokeWidth="2" /></svg>
        </TaskButton>
        <TaskButton>
          <svg width="36" height="36" viewBox="0 0 36 36">
            <defs><linearGradient id="g1" x1="0" y1="0" x2=".7" y2="1"><stop offset="0" stopColor="#ff9a3c" /><stop offset=".5" stopColor="#e0708a" /><stop offset="1" stopColor="#8a62cf" /></linearGradient></defs>
            <circle cx="18" cy="18" r="16.500" fill="#343434" stroke="url(#g1)" strokeWidth="3" />
            <path d="M24 12l4-3 3 5" stroke="#e8788c" strokeWidth="3" fill="none" />
            <circle cx="18" cy="18" r="4.800" fill="none" stroke="#f4f4f4" strokeWidth="5" />
          </svg>
        </TaskButton>
        <TaskButton active>
          <div className="flex h-[34px] w-[34px] items-center justify-center bg-[#f5f5f5]"><TableauMark size={31} /></div>
        </TaskButton>
        <TaskButton open>
          <svg width="32" height="36" viewBox="0 0 32 36" fill="none">
            <path d="M4 3c8-4 24 0 24 13 0 6-3 9-9 11" stroke="#d83b10" strokeWidth="5" /><path d="M5 10c0 6 2 10 6 14" stroke="#c8401c" strokeWidth="2" />
            <path d="M13 1l5 1v20h-4z" fill="#e8e8e8" /><path d="M24 10l2 4-10 12-3-3z" fill="#b9b9b9" />
            <circle cx="6" cy="27" r="3.800" stroke="#1558b0" strokeWidth="3" /><path d="M9 25l6-2" stroke="#1558b0" strokeWidth="3" />
            <circle cx="17.500" cy="31" r="3.500" stroke="#1aa0e8" strokeWidth="3" /><path d="M16.500 28v-5" stroke="#1aa0e8" strokeWidth="3" />
          </svg>
        </TaskButton>
      </div>
      <div className="ml-[154px] mt-[2px] flex h-[33px] w-[33px] shrink-0 items-center justify-center rounded-full border-[3px] border-white bg-[#0a93dc] text-[25px] font-bold leading-none">?</div>
      <Svg w={36} h={26} stroke="#fff" sw={2.4} className="ml-[73px]">
        <path d="M1.500 1.500h29v21.500H4q-2.500 0-2.500-2.500zM31 6h3.500v14.500q0 2.500-2.500 2.500H29" /><path d="M5 6h22M17.500 11.500H27M17.500 15H27M17.500 18.500H27" strokeWidth="1.800" /><path d="M6 11.500h8v7H6z" strokeWidth="1.800" />
      </Svg>
      <span className="ml-[12px] mt-[4px] whitespace-nowrap text-[19.2px] leading-none">32°C</span>
      <span className="ml-[14px] mt-[4px] whitespace-nowrap text-[19.2px] leading-none">Partly sunny</span>
      <div className="ml-auto flex h-full shrink-0 items-center">
        <Svg w={26} h={26} stroke="#fff" sw={1.4}><path d="M1 4.500L24 1v22L1 21zM8 12a4 4 0 0 1 7-2.500M15.500 7v3h-3M15 15a4 4 0 0 1-7 0M7.500 18v-3h3" /><circle cx="19" cy="19" r="5.300" fill="#2f76c8" stroke="none" /></Svg>
        <Svg w={25} h={24} stroke="#fff" sw={1.5} className="ml-[10px]"><path d="M1 5h22v12H1z" /><path d="M3 7h16v8H3z" fill="#fff" /><circle cx="17.500" cy="17" r="6.500" fill="#0a8a1e" stroke="none" /><path d="M17.500 21v-8c-3 3-3 5 0 6.500 3-1.500 3-3.500 0-6.500" strokeWidth="1.200" /></Svg>
        <Svg w={18} h={24} stroke="#fff" className="ml-[14px]"><rect x="1" y="6.500" width="10.500" height="11" rx="2.500" /><path d="M11.500 10.500l5-3v9l-5-3M3 2.500c3.500-2 7-2 10 0M3 21.500c3.500 2 7 2 10 0" /></Svg>
        <Svg w={24} h={20} stroke="#fff" className="ml-[14px]"><path d="M1 7h3.500l5-5.500v17l-5-5.500H1zM12.500 7.500q1.500 2.500 0 5" /><path d="M15.500 5q3.500 5 0 10M18.500 2.500q5 7.500 0 15" stroke="#9a9a9a" /></Svg>
        <div className="ml-[12px] flex h-[22px] w-[23px] items-center justify-center border-2 border-[#b98ac6] bg-[#f3eaf5] pb-[4px] font-['Liberation_Serif',serif] text-[23px] font-bold italic leading-none text-[#8a4a9e]">n</div>
        <Svg w={26} h={22} className="ml-[12px]" stroke="none"><path d="M5 19a5 5 0 0 1 0-10 8 8 0 0 1 15-1 5.500 5.500 0 0 1 1 11z" fill="#a3a6a3" /><path d="M2 1l22 20" stroke="#fff" strokeWidth="1.600" /></Svg>
        <Svg w={25} h={24} stroke="#fff" sw={1.5} className="ml-[11px]"><path d="M0 2h14M0 6.500h14M0 11h9M12 12.500h4l6.500-6v16l-6.500-5h-4z" /></Svg>
        <Svg w={25} h={26} className="ml-[10px]" stroke="none"><path d="M12 1c3 2 7 3 11 3v8c0 6-4 10-11 13C5 22 1 18 1 12V4c4 0 8-1 11-3z" fill="#fff" stroke="#222" /><path d="M12 1v23M1 12h22" stroke="#222" strokeWidth="1.500" /><path d="M17.500 12.500L24.500 25h-14z" fill="#fdb913" /><path d="M17.500 16.500v4.500M17.500 22v1.500" stroke="#222" strokeWidth="1.600" /></Svg>
        <Svg w={24} h={26} className="ml-[12px]" stroke="none"><path d="M1 2l10.500 6L22 2v17l-10.500 5L1 19z" fill="#94969a" /><path d="M6 8.500l5.500 3.500L17 8.500V17l-5.500 3L6 17z" fill="#2a3122" /><path d="M17.500 12.500L24 25H11.500z" fill="#e53935" /><path d="M17.500 16.500v4.500M17.500 22v1.500" stroke="#fff" strokeWidth="1.400" /></Svg>
        <Svg w={20} h={22} className="ml-[14px]" stroke="#c9ccc6" sw={1.4}><path d="M1 21C1 9 9 2 19 2M5.500 21c0-8.500 6-14 13.500-14M10 21c0-5.500 4-9 9-9" /><path d="M14.500 21c0-3 2-4.500 4.500-4.500" /><circle cx="17.500" cy="19.500" r="1.600" fill="#fff" stroke="none" /></Svg>
        <span className="ml-[17px] w-[34px] pt-px text-[16.500px] leading-none">ENG</span>
        <div className="ml-[18px] flex w-[97px] flex-col items-center whitespace-nowrap pl-px text-[17.600px] leading-[28px]"><span>09:53 AM</span><span>08-10-2023</span></div>
        <Svg w={26} h={26} stroke="#fff" sw={1.5} className="ml-[26px]"><path d="M1.500 1.500h23v18.500H17l-4 4.500-4-4.500H1.500z" /></Svg>
        <div className="ml-[29px] mr-[6px] h-full w-[2px] bg-[#8a9083]" />
      </div>
    </div>
  );
}

export default function App() {
  return (
    <div className="relative flex h-[1084px] w-[1924px] flex-col overflow-hidden border-2 border-[#b816ea] bg-[#f5f5f5]">
      <div className="absolute left-[851px] top-0 h-[2px] w-[290px] bg-[#20242a]" />
      <TitleBar />
      <MenuBar />
      <Toolbar />
      <div className={`flex h-[819px] shrink-0 ${UI}`}>
        <DataPane />
        <Cards />
        <Worksheet />
      </div>
      <SheetTabs />
      <StatusBar />
      <Taskbar />
    </div>
  );
}
